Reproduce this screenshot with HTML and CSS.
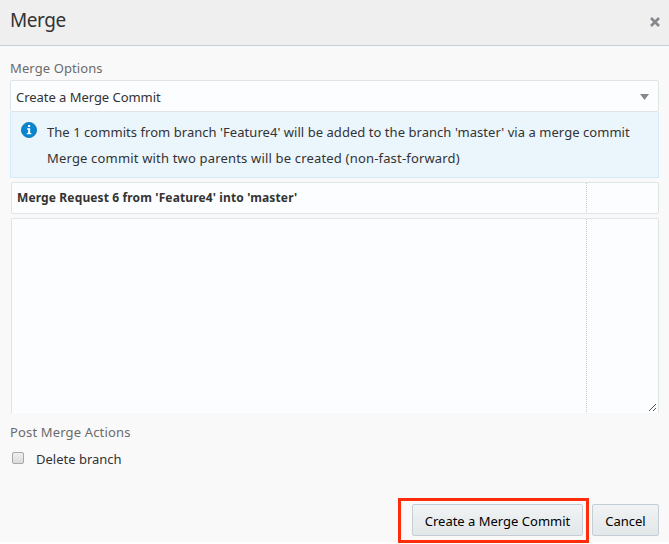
FILE: index.html
```html
<!DOCTYPE html>
<html lang="en">
<head>
<meta charset="utf-8">
<title>Merge</title>
<link rel="stylesheet" href="styles.css">
</head>
<body>
<section class="dialog">
  <header class="dialog-header">
    <h1><span>Merge</span></h1>
    <svg class="close" viewBox="0 0 10 10"><path d="M1 1L9 9M9 1L1 9"/></svg>
  </header>
  <main class="content">
    <div class="label options-label"><span>Merge Options</span></div>
    <div class="select">
      <span class="select-value">Create a Merge Commit</span>
      <svg class="arrow" viewBox="0 0 9 6"><path d="M0 0H9L4.5 6Z"/></svg>
    </div>
    <div class="info">
      <svg class="info-icon" viewBox="0 0 16 16"><circle cx="8" cy="8" r="7.6"/><path d="M7 3H9.2V5H7ZM6 6.3H9.2V11H10.3V12.3H5.8V11H7.1V7.6H6Z"/></svg>
      <div class="info-text">
        <p><span class="line-one">The 1 commits from branch 'Feature4' will be added to the branch 'master' via a merge commit</span></p>
        <p><span class="line-two">Merge commit with two parents will be created (non-fast-forward)</span></p>
      </div>
    </div>
    <div class="field subject"><span>Merge Request 6 from 'Feature4' into 'master'</span></div>
    <div class="field message">
      <svg class="grip" viewBox="0 0 7 7" shape-rendering="crispEdges"><path d="M0 6h1v1H0zM1 5h1v1H1zM2 4h1v1H2zM3 3h1v1H3zM4 2h1v1H4zM5 1h1v1H5zM6 0h1v1H6zM4 6h1v1H4zM5 5h1v1H5zM6 4h1v1H6z"/></svg>
    </div>
    <div class="label post-label"><span>Post Merge Actions</span></div>
    <label class="check"><i class="box"></i><span>Delete branch</span></label>
  </main>
  <footer class="actions">
    <div class="highlight"><button class="commit"><span>Create a Merge Commit</span></button></div>
    <button class="cancel"><span>Cancel</span></button>
  </footer>
</section>
</body>
</html>
```

FILE: styles.css
```css
* { box-sizing: border-box; }
body {
  margin: 0;
  height: 544px;
  overflow: hidden;
  background: #fff;
  color: #333;
  font: 13px/20px "Noto Sans", "Open Sans", sans-serif;
}
.dialog { height: 542px; background: #f9f9f9; display: flex; flex-direction: column; }
.dialog-header {
  height: 46px;
  flex: none;
  display: flex;
  justify-content: space-between;
  padding: 0 9px 0 10px;
  background: #efefef;
  border-bottom: 1px solid #c4ced7;
}
h1 { margin: 0; font-size: 19px; line-height: 41px; font-weight: 400; }
h1 span { letter-spacing: -.45px; }
.close { width: 10px; height: 10px; margin-top: 17px; fill: none; stroke: #85898d; stroke-width: 2.6; }
.content { padding: 0 10px; }
.label { color: #6b6b6b; }
.options-label { height: 34px; padding-top: 12px; }
.options-label span { letter-spacing: .1px; }
.select {
  height: 32px;
  display: flex;
  align-items: center;
  justify-content: space-between;
  padding: 1px 9px 0 5px;
  background: #fcfdfe;
  border: 1px solid #dfe4e7;
  border-radius: 2px;
}
.select-value { letter-spacing: -.04px; }
.arrow { width: 9px; height: 6px; fill: #85898d; }
.info {
  height: 66px;
  display: flex;
  gap: 10px;
  padding: 7px 0 0 10px;
  background: #ebf5fc;
  border: 1px solid #d6ebf8;
  border-top: 0;
}
.info-icon { width: 16px; height: 16px; margin-top: 3px; flex: none; }
.info-icon circle { fill: #0785d1; stroke: #0875b8; stroke-width: .8; }
.info-icon path { fill: #fff; }
.info-text { white-space: nowrap; }
.info-text p { margin: 0; height: 26px; line-height: 26px; }
.line-one { letter-spacing: .045px; }
.line-two { letter-spacing: .175px; }
.field {
  margin-left: 1px;
  border: 1px solid #dfe4e7;
  border-radius: 2px;
  background: linear-gradient(#c6c9cb 50%, transparent 50%) 574px 0 / 1px 2px repeat-y, #fcfdfe;
}
.subject { height: 32px; margin-top: 4px; padding-left: 5px; line-height: 30px; font-size: 12px; font-weight: 700; letter-spacing: .13px; }
.message {
  height: 195px;
  margin-top: 4px;
  display: flex;
  justify-content: flex-end;
  align-items: flex-end;
  padding: 0 2px 2px 0;
  border-bottom: 0;
  border-radius: 2px 2px 0 0;
}
.grip { width: 7px; height: 7px; fill: #555; }
.post-label { margin-top: 9px; letter-spacing: .15px; }
.check { display: flex; gap: 12px; margin-top: 7px; padding-left: 2px; }
.box {
  width: 12px;
  height: 12px;
  margin-top: 3px;
  border: 1px solid #a8a8a8;
  border-radius: 2px;
  background: linear-gradient(#efefef, #dcdcdc);
}
.actions { display: flex; gap: 3px; margin: 29px 10px 0 398px; }
.highlight { width: 191px; height: 45px; flex: none; border: 3px solid #fe2c0b; padding: 3px 0 0 11px; }
button {
  display: block;
  height: 32px;
  padding: 2px 0 0;
  border: 1px solid #c4ced7;
  border-radius: 2px;
  background: linear-gradient(#f1f3f4, #e3e7e9);
  color: #000;
  font: inherit;
  white-space: nowrap;
}
.commit { width: 171px; }
.cancel { width: 67px; margin-top: 6px; }
```
